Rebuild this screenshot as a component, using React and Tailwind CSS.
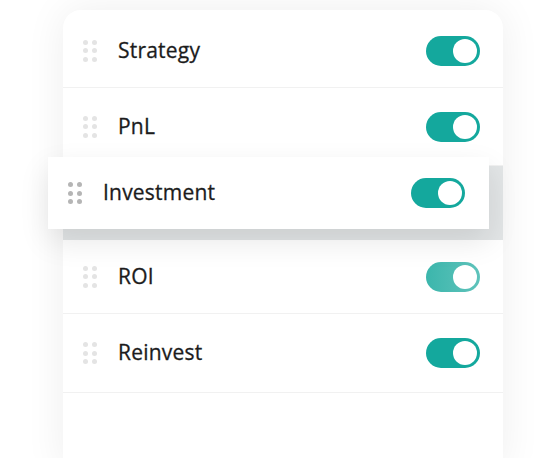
const font = { fontFamily: '"Open Sans", "Noto Sans", sans-serif' };

function Grip({ dark }) {
  const c = dark ? 'bg-[#b5b5b5]' : 'bg-[#e4e4e4]';
  return (
    <div className="grid grid-cols-2 gap-x-[4px] gap-y-[3.5px] shrink-0">
      {[0, 1, 2, 3, 4, 5].map((i) => (
        <span key={i} className={`block w-[5px] h-[5px] rounded-full ${c}`} />
      ))}
    </div>
  );
}

function Toggle({ faded }) {
  return (
    <div
      className={`w-[54px] h-[30px] rounded-full flex items-center justify-end pr-[3px] shrink-0 ${
        faded ? 'bg-gradient-to-r from-[#3bb6ac] to-[#5ec3bb]' : 'bg-[#14a89d]'
      }`}
    >
      <span className="block w-[24px] h-[24px] rounded-full bg-white" />
    </div>
  );
}

function Row({ label, h, faded, last, first }) {
  return (
    <div
      className={`flex items-center pl-[20px] pr-[23px] ${first ? 'pt-[4px]' : ''} ${last ? '' : 'border-b border-[#f1f1f1]'}`}
      style={{ height: h }}
    >
      <Grip />
      <span className="ml-[21px] text-[21px] font-medium tracking-[0.01em] text-[#1c1c1c] [-webkit-text-stroke:0.3px_#1c1c1c]" style={font}>
        {label}
      </span>
      <div className="flex-1" />
      <Toggle faded={faded} />
    </div>
  );
}

export default function App() {
  return (
    <div className="relative w-full h-[458px] bg-white overflow-hidden" style={font}>
      <div className="ml-[63px] mt-[10px] w-[440px] h-[460px] rounded-t-[18px] bg-white shadow-[0_0_40px_rgba(0,0,0,0.07)]">
        <Row label="Strategy" h={78} first />
        <Row label="PnL" h={78} />
        {/* empty slot left by the dragged row */}
        <div className="h-[74px] bg-[#e2e5e6]" />
        <Row label="ROI" h={74} faded />
        <Row label="Reinvest" h={79} />
      </div>

      {/* dragged row */}
      <div className="absolute left-[48px] top-[157px] w-[441px] h-[72px] bg-white flex items-center pl-[20px] pr-[24px] shadow-[0_12px_30px_rgba(0,0,0,0.10)]">
        <Grip dark />
        <span className="ml-[21px] text-[21px] font-medium tracking-[0.01em] text-[#1c1c1c] [-webkit-text-stroke:0.3px_#1c1c1c]" style={font}>
          Investment
        </span>
        <div className="flex-1" />
        <Toggle />
      </div>
    </div>
  );
}
